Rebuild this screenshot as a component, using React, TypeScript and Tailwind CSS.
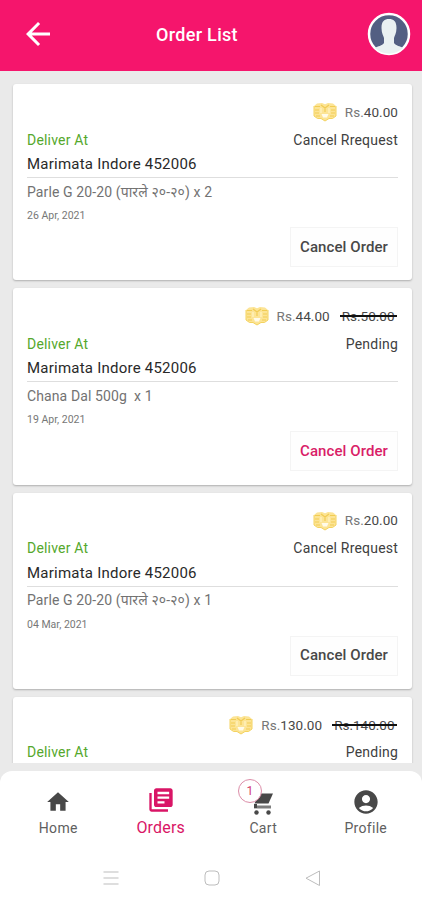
import React from "react";
import { MdArrowBack, MdHome, MdLibraryBooks, MdAccountCircle } from "react-icons/md";

type Order = {
  price: string;
  oldPrice?: string;
  status: string;
  item?: string;
  date?: string;
  active?: boolean;
};

const orders: Order[] = [
  { price: "40.00", status: "Cancel Rrequest", item: "Parle G 20-20 (पारले २०-२०) x 2", date: "26 Apr, 2021" },
  { price: "44.00", oldPrice: "50.00", status: "Pending", item: "Chana Dal 500g\u00a0 x 1", date: "19 Apr, 2021", active: true },
  { price: "20.00", status: "Cancel Rrequest", item: "Parle G 20-20 (पारले २०-२०) x 1", date: "04 Mar, 2021" },
  { price: "130.00", oldPrice: "140.00", status: "Pending" },
];

function Coins() {
  return (
    <svg viewBox="0 0 24 20" className="mr-[8px] h-5 w-6">
      <path d="M1 4 4 1.500 9 1l3 1.200L15 1l5 .5 3 2.500v10l-3.500 2.500L16 16.500l-4 2.500-4-2.500-3.500 0L1 14Z" fill="#fce495" />
      <path d="M2 4.500h5M2 8h4M2 11h4M3 14h4M17 4.500h5M18 8h4M18 11h4M17 14h4M8 3l4 3 4-3M12 6v4" stroke="#f1cc54" strokeWidth="1.200" fill="none" />
      <path d="M1 4v10l3.500 2.500H8l4 2.500 4-2.500h3.500L23 14V4" stroke="#f4d360" strokeWidth="1" fill="none" />
      <path d="M8.500 12h7l-1.500 3.500h-4Z" fill="#fffbea" />
      <path d="M8 6v5M16 6v5" stroke="#fff3c4" strokeWidth="1.200" />
    </svg>
  );
}

function OrderCard({ order }: { order: Order }) {
  return (
    <article className="h-[196.300px] shrink-0 rounded-[3px] bg-white px-[14px] pt-4 shadow-[0_1px_2px_rgba(0,0,0,0.26)]">
      <div className="flex h-6 items-center justify-end text-[13.500px] tracking-[0.050px] text-[#484848]">
        <Coins />
        <span><span className="text-[#777]">Rs.</span>{order.price}</span>
        {order.oldPrice && (
          <span className="relative ml-[10px] mr-[1.500px] flex h-5 items-center px-[2px] tracking-[0px]">
            Rs.{order.oldPrice}
            <span className="absolute inset-x-0 top-[9px] h-[2px] bg-[#111]" />
          </span>
        )}
      </div>
      <div className="flex h-8 items-center justify-between text-[14px] tracking-[0.200px]">
        <span className="text-[#55a82c]">Deliver At</span>
        <span className="text-[#404040]">{order.status}</span>
      </div>
      {order.item && (
        <>
          <div className="flex h-[22px] items-start border-b border-[#dedede] text-[15px] leading-4 tracking-[0.230px] text-[#292929]">
            Marimata Indore 452006
          </div>
          <div className="flex h-7 items-center text-[14px] tracking-[0.110px] text-[#727272]">{order.item}</div>
          <div className="flex h-5 items-center text-[10.500px] text-[#777]">{order.date}</div>
          <div className="flex justify-end">
            <button
              className={
                "mt-px h-10 w-[108px] whitespace-nowrap border border-[#f4f4f4] bg-[#fefefe] text-[15px] font-medium tracking-[0.080px] " +
                (order.active ? "text-[#d91d68]" : "text-[#484848]")
              }
            >
              Cancel Order
            </button>
          </div>
        </>
      )}
    </article>
  );
}

function CartIcon() {
  return (
    <svg viewBox="0 0 20 24" className="h-6 w-5" fill="#484848">
      <path d="M6 .5h14l-4.500 10H1.500Z" />
      <path d="M1 12.500h17V15.500H1Z" fill="#7d7d7d" />
      <path d="M1 11h3v4H1Z" />
      <circle cx="3.500" cy="19.500" r="2.200" />
      <circle cx="15.500" cy="19.500" r="2.200" />
    </svg>
  );
}

export default function App() {
  return (
    <div className="flex h-[900px] w-[422px] flex-col overflow-hidden bg-[#eaeaea] font-[Roboto,'Noto_Sans',sans-serif]">
      <header className="grid h-[70.500px] shrink-0 grid-cols-[1fr_auto_1fr] items-center bg-[#f5156c] text-white">
        <MdArrowBack className="ml-[20px] mt-[-3px] h-9 w-9" />
        <h1 className="mr-7 -mt-px text-[18px] font-medium tracking-[0.300px]">Order List</h1>
        <svg viewBox="0 0 44 44" className="mr-[11px] mt-[-3px] h-11 w-11 justify-self-end">
          <circle cx="22" cy="22" r="20" fill="#535f82" stroke="#fff" strokeWidth="2.500" />
          <path d="M14.500 16c0-7 3-9 7.500-9s7.500 2 7.500 9c0 5-2 8-2.500 10v5c2 3 6 3 9 5a20 20 0 0 1-28 0c3-2 7-2 9-5v-5c-.5-2-2.500-5-2.500-10Z" fill="#eaf1f2" />
        </svg>
      </header>
      <main className="flex h-[692.500px] shrink-0 flex-col gap-2 overflow-hidden pl-[13px] pr-[10px] pt-[13.500px]">
        {orders.map((o, i) => <OrderCard key={i} order={o} />)}
      </main>
      <nav className="mt-2 h-[129px] shrink-0 rounded-t-xl bg-white">
        <div className="grid h-[84px] grid-cols-4 pl-[7px] pr-[5px] text-[14px] tracking-[0.300px] text-[#606060]">
          <div className="flex flex-col items-center pt-[18px]">
            <MdHome className="h-[26px] w-[26px] text-[#484848]" />
            <span className="mt-[3px] leading-5">Home</span>
          </div>
          <div className="flex flex-col items-center pt-[15px] text-[#d91566]">
            <MdLibraryBooks className="h-7 w-7" />
            <span className="mt-[4px] text-[16px] leading-5 tracking-[0.200px]">Orders</span>
          </div>
          <div className="relative flex flex-col items-center pt-[22px]">
            <CartIcon />
            <span className="mt-px leading-5">Cart</span>
            <span className="absolute left-[26px] top-[8px] flex h-6 w-6 items-center justify-center rounded-full border border-[#dc8da8] bg-white text-[12px] text-[#d33b6e]">1</span>
          </div>
          <div className="flex flex-col items-center pt-[17px]">
            <MdAccountCircle className="h-7 w-7 text-[#484848]" />
            <span className="mt-[2px] leading-5">Profile</span>
          </div>
        </div>
        <div className="flex h-[45px] items-start justify-center gap-[85px] pl-[2px] text-[#bdbdbd]">
          <svg viewBox="0 0 16 16" className="mt-[15px] h-4 w-4" stroke="currentColor" strokeWidth="1.200"><path d="M0.500 2h15M0.500 8h15M0.500 14h15" /></svg>
          <svg viewBox="0 0 16 16" className="mt-[15px] h-4 w-4" stroke="currentColor" fill="none"><rect x="1" y="1" width="14" height="14" rx="4" /></svg>
          <svg viewBox="0 0 16 16" className="mt-[15px] h-4 w-4" stroke="currentColor" fill="none"><path d="M14.500 1v14.500L1 8.200Z" /></svg>
        </div>
      </nav>
    </div>
  );
}
